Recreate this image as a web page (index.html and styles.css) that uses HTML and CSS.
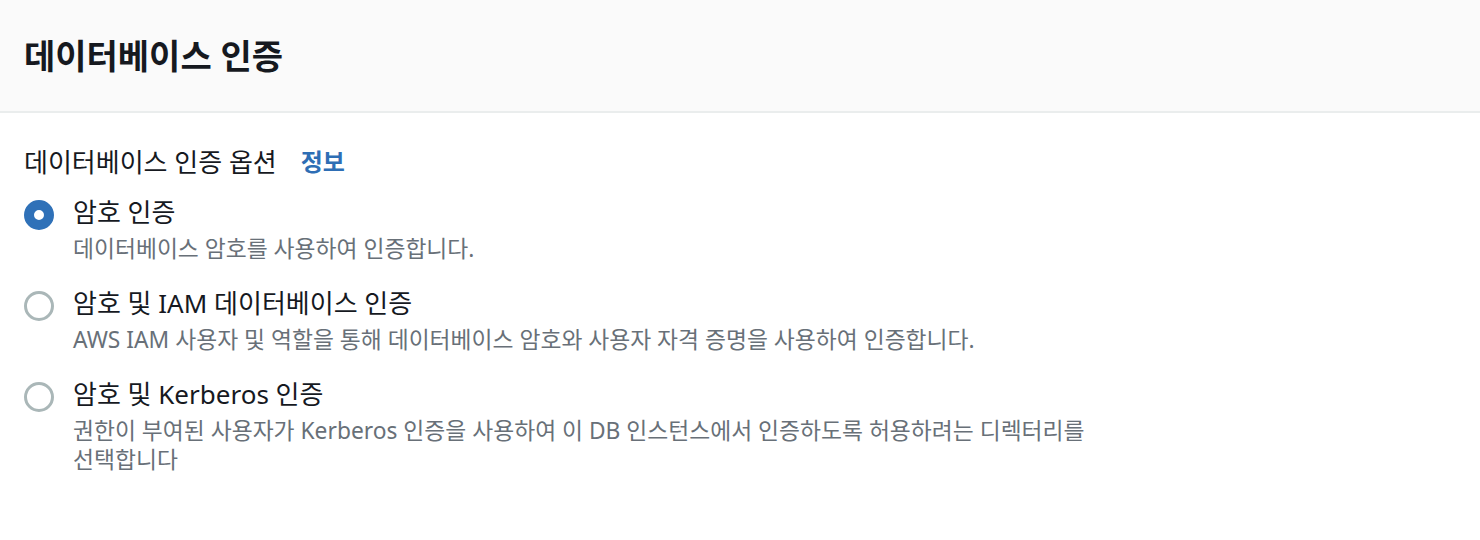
FILE: index.html
```html
<!DOCTYPE html>
<html lang="ko">
<head>
<meta charset="utf-8">
<title>데이터베이스 인증</title>
<link rel="stylesheet" href="styles.css">
</head>
<body>
<section class="panel">
  <header class="panel-header">
    <h2 class="panel-title">데이터베이스 인증</h2>
  </header>
  <div class="panel-body">
    <div class="field-label">
      <span>데이터베이스 인증 옵션</span>
      <a class="info-link" href="#">정보</a>
    </div>
    <div class="radio-group">
      <label class="radio-item">
        <span class="radio checked"></span>
        <span class="radio-text">
          <span class="radio-label">암호 인증</span>
          <span class="radio-desc">데이터베이스 암호를 사용하여 인증합니다.</span>
        </span>
      </label>
      <label class="radio-item">
        <span class="radio"></span>
        <span class="radio-text">
          <span class="radio-label">암호 및 IAM 데이터베이스 인증</span>
          <span class="radio-desc">AWS IAM 사용자 및 역할을 통해 데이터베이스 암호와 사용자 자격 증명을 사용하여 인증합니다.</span>
        </span>
      </label>
      <label class="radio-item">
        <span class="radio"></span>
        <span class="radio-text">
          <span class="radio-label">암호 및 Kerberos 인증</span>
          <span class="radio-desc narrow">권한이 부여된 사용자가 Kerberos 인증을 사용하여 이 DB 인스턴스에서 인증하도록 허용하려는 디렉터리를 선택합니다</span>
        </span>
      </label>
    </div>
  </div>
</section>
</body>
</html>
```
FILE: styles.css
```css
* { box-sizing: border-box; }
html, body { margin: 0; padding: 0; background: #ffffff; }
body {
  font-family: "Noto Sans", "Noto Sans CJK KR", sans-serif;
  color: #16191f;
  width: 1480px;
  height: 540px;
  overflow: hidden;
}
.panel { width: 1480px; }
.panel-header {
  background: #fafafa;
  border-bottom: 2px solid #eaeded;
  height: 113px;
  display: flex;
  align-items: center;
  padding: 0 24px;
}
.panel-title {
  margin: 0;
  font-size: 34px;
  line-height: 44px;
  font-weight: 700;
  color: #16191f;
}
.panel-body { padding: 32px 24px 0 24px; }
.field-label {
  display: flex;
  align-items: center;
  gap: 24px;
  font-size: 26px;
  line-height: 34px;
  color: #16191f;
}
.info-link {
  color: #2e6eb5;
  font-weight: 700;
  text-decoration: none;
  font-size: 24px;
}
.radio-group {
  display: flex;
  flex-direction: column;
  gap: 22px;
  margin-top: 15px;
}
.radio-item { display: flex; align-items: flex-start; gap: 19px; }
.radio {
  flex: none;
  width: 30px;
  height: 30px;
  border-radius: 50%;
  border: 3px solid #aab7b8;
  background: #fff;
  margin-top: 6px;
}
.radio.checked { border: 10.5px solid #2f71b8; }
.radio-text { display: flex; flex-direction: column; }
.radio-label { font-size: 26px; line-height: 36px; color: #16191f; }
.radio-desc { font-size: 22.8px; line-height: 29px; color: #687078; margin-top: 4px; }
.radio-desc.narrow { max-width: 1014px; }
```
